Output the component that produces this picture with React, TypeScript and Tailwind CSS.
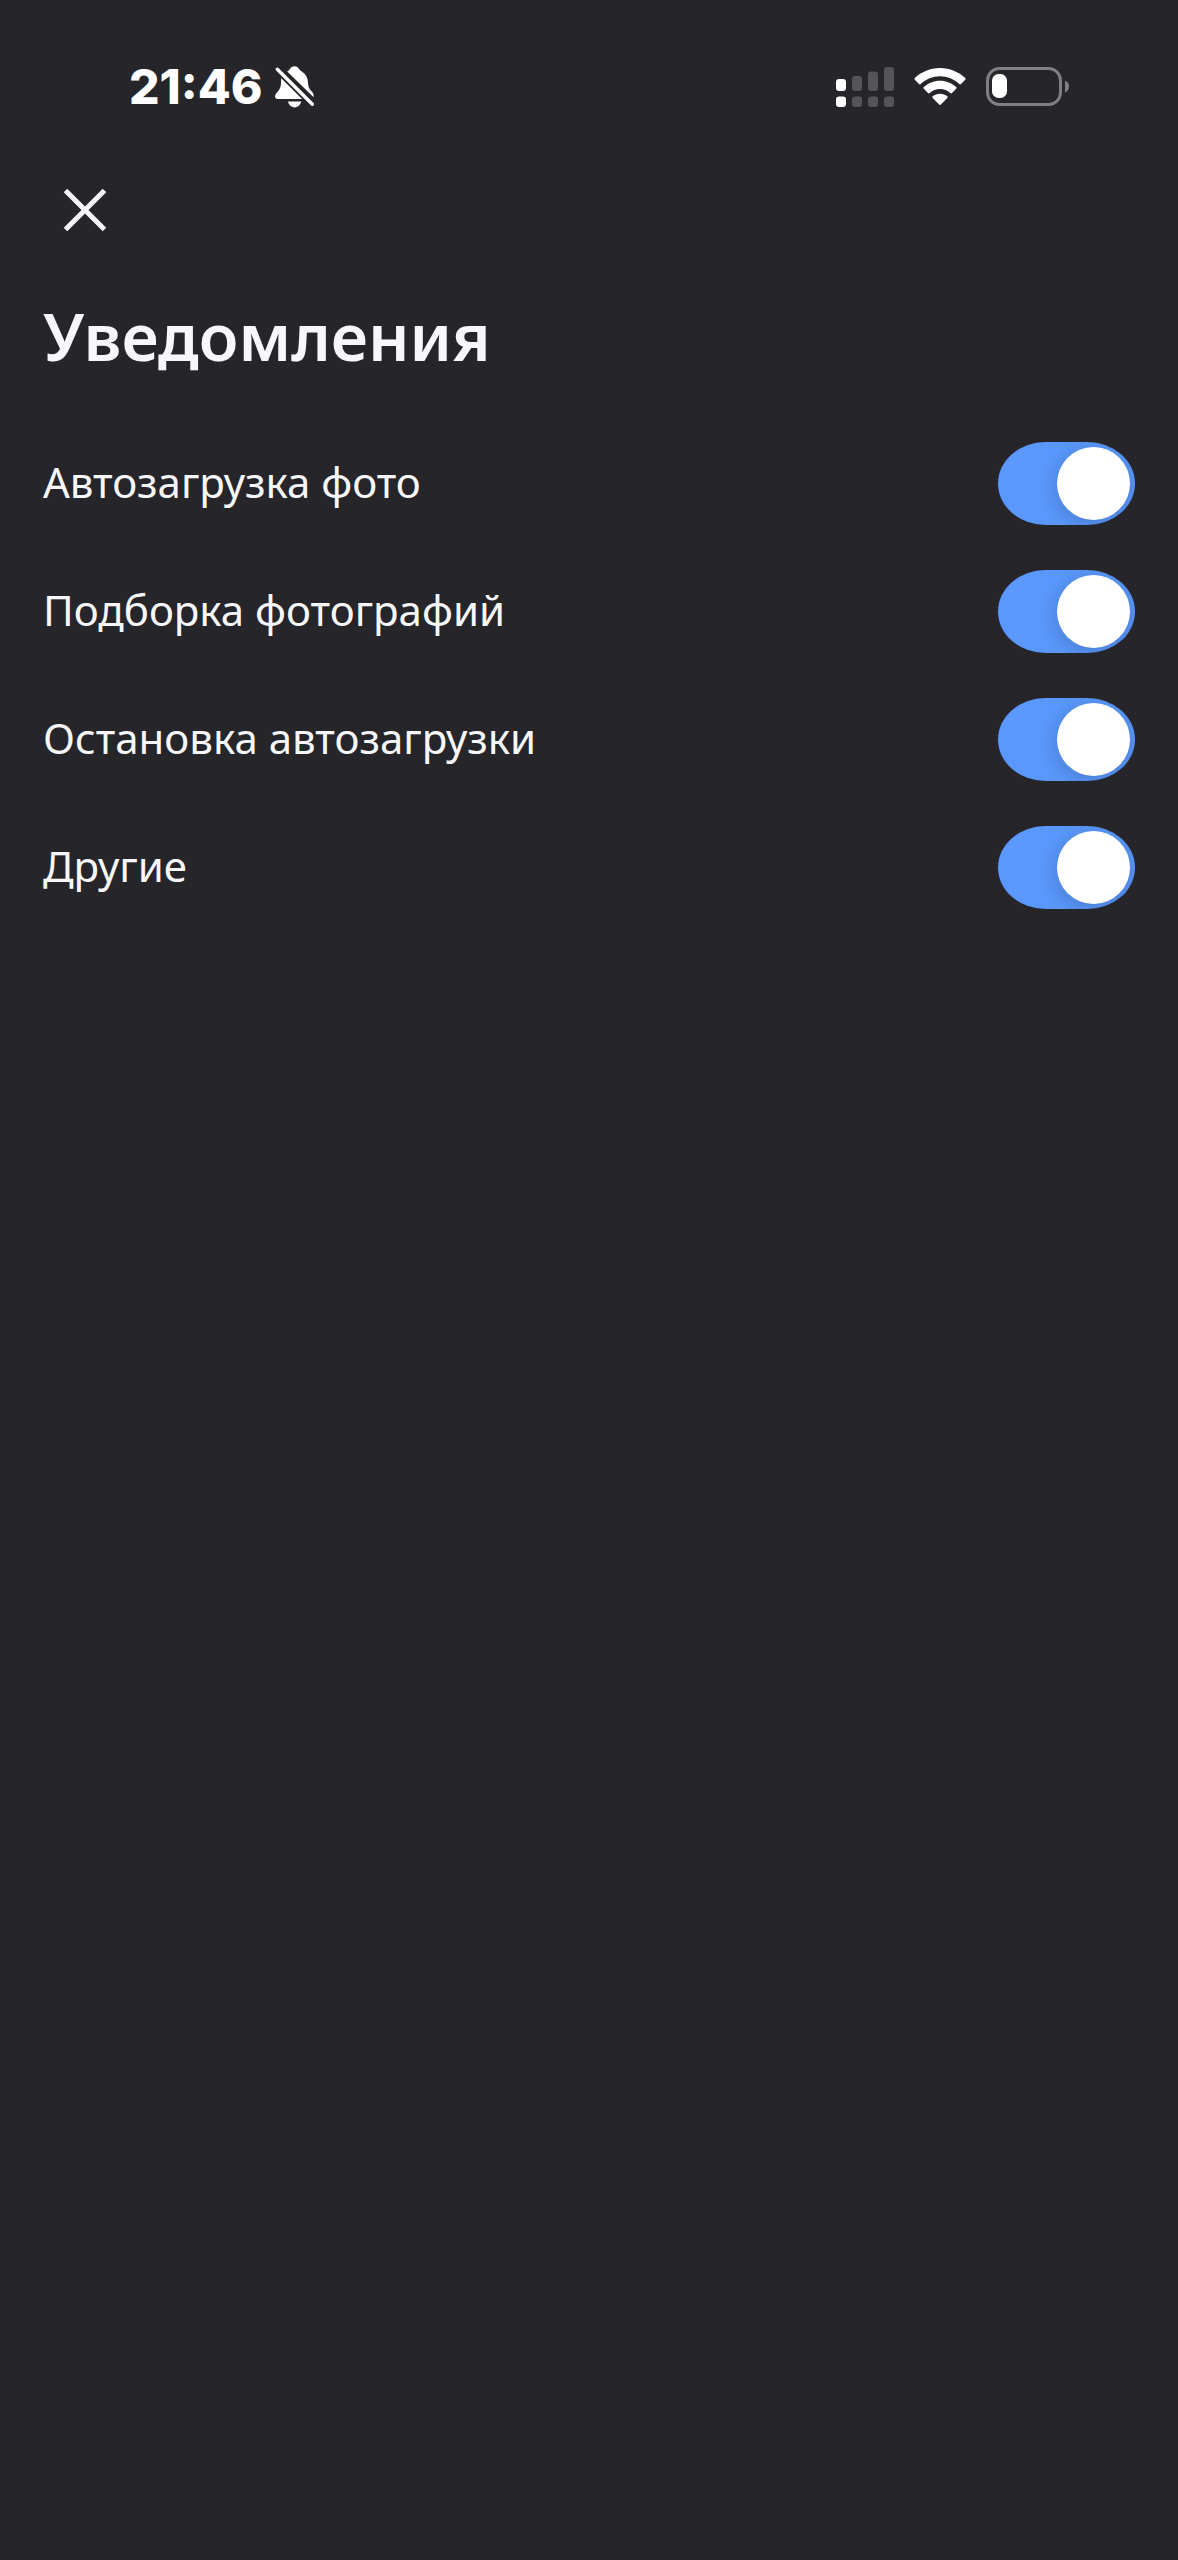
import { useState } from "react";

function BellOffIcon() {
  return (
    <svg width="40" height="42" viewBox="0 0 40 42" fill="#fff" aria-hidden="true">
      <path d="M11.5 6C13 5 14 4.400 14.700 3.200C15.800 1.300 17.500 0.200 19.500 0.200C21.500 0.200 23.200 1.300 24.300 3.200C25 4.400 26 5 27.500 6C31 8.600 32.800 12 33 16.500C33.200 20.800 34 22.800 36.500 25.200C38.200 27 39 28.800 38.600 31.200L12.200 5.500Z" />
      <path d="M6.200 11.500L28.400 33H2.800C1 33 0 31.800 0 30.300C0 28.600 1.200 27.200 2.800 25.400C5.200 22.800 5.900 20.500 6 16.500Z" />
      <path d="M13 35.600H26.200C25.600 39 23 41.400 19.600 41.400C16.200 41.400 13.600 39 13 35.600Z" />
      <path d="M2.300 3.300L37.300 38.300" stroke="#25252a" strokeWidth="7" strokeLinecap="round" />
      <path d="M2.300 3.300L37.300 38.300" stroke="#fff" strokeWidth="3.400" strokeLinecap="round" />
    </svg>
  );
}

function SignalIcon() {
  return (
    <svg width="58" height="40" viewBox="0 0 58 40" aria-hidden="true">
      <g fill="#fff">
        <rect x="0" y="12" width="10" height="12" rx="3" />
        <rect x="0" y="29.500" width="10" height="10.500" rx="3" />
      </g>
      <g fill="#545459">
        <rect x="16" y="9" width="10" height="15" rx="3" />
        <rect x="32" y="4.500" width="10" height="19.500" rx="3" />
        <rect x="48" y="0" width="10" height="24" rx="3" />
        <rect x="16" y="29.500" width="10" height="10.500" rx="3" />
        <rect x="32" y="29.500" width="10" height="10.500" rx="3" />
        <rect x="48" y="29.500" width="10" height="10.500" rx="3" />
      </g>
    </svg>
  );
}

function WifiIcon() {
  return (
    <svg width="52" height="38" viewBox="0 0 52 38" fill="#fff" aria-hidden="true">
      <path d="M26 0C35.700 0 44.600 3.800 51.200 10.100C51.700 10.600 51.700 11.300 51.200 11.800L47 16C46.500 16.500 45.800 16.500 45.300 16C40.200 11.200 33.400 8.300 26 8.300C18.600 8.300 11.800 11.200 6.700 16C6.200 16.500 5.500 16.500 5 16L0.800 11.800C0.300 11.300 0.300 10.600 0.800 10.100C7.400 3.800 16.300 0 26 0Z" />
      <path d="M26 12.800C32.200 12.800 37.900 15.200 42.200 19.100C42.700 19.600 42.700 20.300 42.200 20.800L38 25C37.500 25.500 36.800 25.500 36.300 25C33.500 22.500 29.900 21 26 21C22.100 21 18.500 22.500 15.700 25C15.200 25.500 14.500 25.500 14 25L9.800 20.800C9.300 20.300 9.300 19.600 9.800 19.100C14.100 15.200 19.800 12.800 26 12.800Z" />
      <path d="M26 25.700C28.800 25.700 31.300 26.700 33.300 28.300C33.800 28.800 33.800 29.500 33.300 30L26.900 36.500C26.400 37 25.600 37 25.100 36.500L18.700 30C18.200 29.500 18.200 28.800 18.700 28.300C20.700 26.700 23.200 25.700 26 25.700Z" />
    </svg>
  );
}

function BatteryIcon() {
  return (
    <svg width="84" height="40" viewBox="0 0 84 40" aria-hidden="true">
      <rect x="1.500" y="1.500" width="73" height="36" rx="12" fill="none" stroke="#7f7f82" strokeWidth="3" />
      <rect x="6" y="7" width="15" height="24" rx="6.500" fill="#fff" />
      <path d="M79 13.500C81.500 14.500 83 16.700 83 19.500C83 22.300 81.500 24.500 79 25.500Z" fill="#7f7f82" />
    </svg>
  );
}

function CloseIcon() {
  return (
    <svg width="44" height="44" viewBox="0 0 44 44" fill="none" stroke="#f7f7fa" strokeWidth="5" aria-hidden="true">
      <path d="M2.500 2.500L41.500 41.500M41.500 2.500L2.500 41.500" />
    </svg>
  );
}

function StatusBar() {
  return (
    <div className="flex h-[168px] items-center justify-between pt-1.5 pr-[108px] pl-[129px]">
      <div className="flex items-center gap-3">
        <time className="font-['Inter',sans-serif] text-[48px] leading-none font-extrabold text-white">21:46</time>
        <BellOffIcon />
      </div>
      <div className="flex items-center gap-5">
        <SignalIcon />
        <WifiIcon />
        <BatteryIcon />
      </div>
    </div>
  );
}

function SettingRow({ id, label }: { id: string; label: string }) {
  const [on, setOn] = useState(true);
  return (
    <li className="flex items-center justify-between">
      <label htmlFor={id} className="pb-1 text-[42px] leading-[56px]">
        {label}
      </label>
      <input
        id={id}
        type="checkbox"
        role="switch"
        checked={on}
        onChange={(e) => setOn(e.target.checked)}
        className="flex h-[83px] w-[137px] shrink-0 cursor-pointer appearance-none items-center overflow-hidden rounded-[48px/42px] bg-[#48484f] px-[5px] before:size-[73px] before:rounded-full before:bg-white before:shadow-[0_4px_20px_rgba(0,0,0,0.2)] before:content-[''] checked:justify-end checked:bg-[#5a98fd]"
      />
    </li>
  );
}

const settings = [
  { id: "photo-upload", label: "Автозагрузка фото" },
  { id: "photo-selection", label: "Подборка фотографий" },
  { id: "upload-stopped", label: "Остановка автозагрузки" },
  { id: "other", label: "Другие" },
];

export default function App() {
  return (
    <div className="min-h-screen bg-[#25252a] font-['Noto_Sans',sans-serif] text-[#f7f7fa]">
      <StatusBar />
      <main className="px-[43px]">
        <button type="button" aria-label="Закрыть" className="flex size-[84px] items-center justify-center">
          <CloseIcon />
        </button>
        <h1 className="mt-11 text-[65px] leading-[80px] font-semibold">Уведомления</h1>
        <ul className="mt-[66px] flex flex-col gap-[45px]">
          {settings.map((s) => (
            <SettingRow key={s.id} {...s} />
          ))}
        </ul>
      </main>
    </div>
  );
}
